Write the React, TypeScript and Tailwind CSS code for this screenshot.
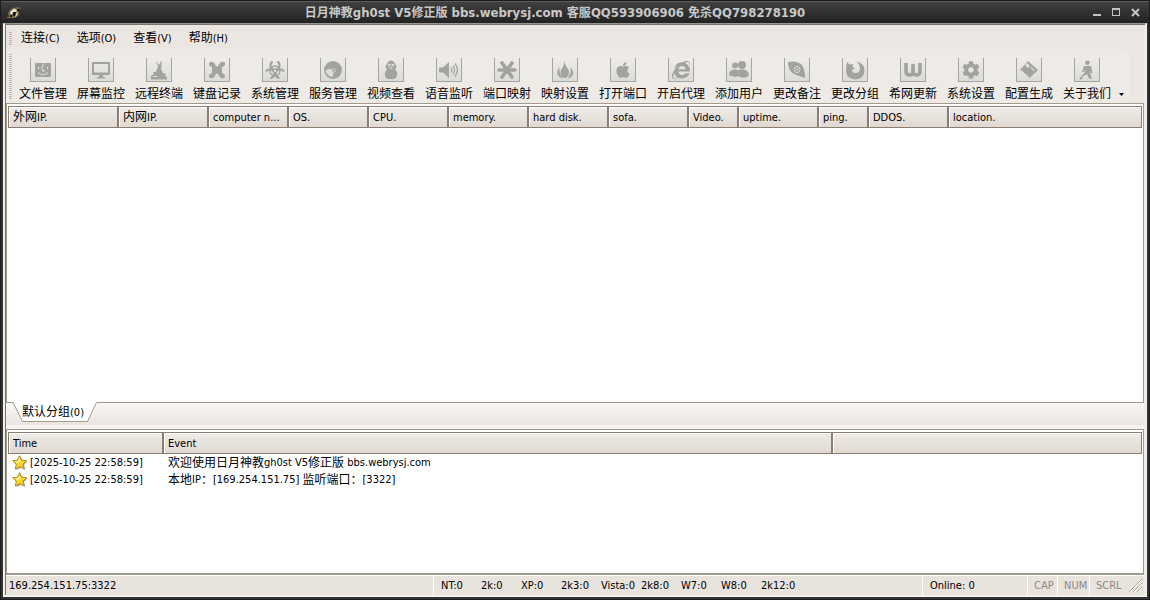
import React from "react";
import { FaApple, FaCog, FaInternetExplorer } from "react-icons/fa";

const CJK = /([\u3000-\u9fff\uff00-\uffef]+)/;

/** Chinese runs keep a 12px size whatever the size of the Latin text around them. */
function Mixed({ text }: { text: string }) {
  return (
    <>
      {text.split(CJK).map((part, i) =>
        i % 2 === 1 ? (
          <span key={i} className="text-[12px]">
            {part}
          </span>
        ) : (
          part
        ),
      )}
    </>
  );
}

const Draw = ({ children }: { children: React.ReactNode }) => (
  <svg viewBox="0 0 20 20" className="size-5" fill="currentColor" aria-hidden="true">
    {children}
  </svg>
);

const tools: { label: string; icon: React.ReactNode }[] = [
  {
    label: "文件管理",
    icon: (
      <Draw>
        <rect x="2" y="3" width="16" height="14" rx="1" />
        <path d="M10.5 3.500 C9 7 9 9 9 10.500 H11 V12 M5.500 7 V9 M14.500 7 V9 M5 12.500 C8 15.500 12 15.500 15 12.500" stroke="#e2e3e0" fill="none" />
      </Draw>
    ),
  },
  {
    label: "屏幕监控",
    icon: (
      <Draw>
        <path fillRule="evenodd" d="M1 2H19V15H12V17H14V18.500H6V17H8V15H1ZM3 4V12.500H17V4Z" />
      </Draw>
    ),
  },
  {
    label: "远程终端",
    icon: (
      <Draw>
        <path d="M6 1 10 5 12.500 0.500 12.500 6 12 9 14 13 17 14 16 16 18 17V19.500H2V16L5 14 4 12 7 12 9 6Z" />
        <path d="M4 16.500H8" stroke="#dddeda" fill="none" />
      </Draw>
    ),
  },
  {
    label: "键盘记录",
    icon: (
      <Draw>
        <path d="M2 3Q5 0 8 4Q8.500 6.500 10 6.500Q11.500 6.500 12 4Q15 0 18 3Q18.500 6 15 7V13Q18.500 14 18 17Q15 20 12 16Q11.500 13.500 10 13.500Q8.500 13.500 8 16Q5 20 2 17Q1.500 14 5 13V7Q1.500 6 2 3Z" />
      </Draw>
    ),
  },
  {
    label: "系统管理",
    icon: (
      <Draw>
        <g fill="none" stroke="currentColor">
          <path d="M7.500 1.500A4.500 4.500 0 1 0 12.500 1.500" strokeWidth="2.200" />
          <path d="M1 11.500A4.500 4.500 0 1 1 5.500 18.200" strokeWidth="2.200" />
          <path d="M19 11.500A4.500 4.500 0 1 0 14.500 18.200" strokeWidth="2.200" />
          <circle cx="10" cy="11" r="5" strokeWidth="1.400" />
        </g>
        <circle cx="10" cy="11" r="1.200" fill="#e0e1dd" />
      </Draw>
    ),
  },
  {
    label: "服务管理",
    icon: (
      <Draw>
        <circle cx="10" cy="10" r="9" />
        <path d="M2.500 11Q5 8 8.500 9.500Q10.500 7.500 12.500 9.500Q13 12 10.500 12.500L9.500 17Q4 16 2.500 11Z" fill="#dddeda" />
        <circle cx="10.500" cy="10.500" r="1.300" />
      </Draw>
    ),
  },
  {
    label: "视频查看",
    icon: (
      <Draw>
        <path d="M10 0.500Q13 0.500 14 4Q17 7 14 9.500Q17 12 16 16Q14 20 10 19Q6 20 4 16Q3 12 6 9.500Q3 7 6 4Q7 0.500 10 0.500Z" />
        <circle cx="8.300" cy="5" r="1.200" fill="#e2e3e0" />
        <circle cx="11.700" cy="5" r="1.200" fill="#e2e3e0" />
        <path d="M7.500 7.500H12.500L10 9Z" fill="#e2e3e0" />
      </Draw>
    ),
  },
  {
    label: "语音监听",
    icon: (
      <Draw>
        <path d="M0 7.500H4L10 2V18L4 12.500H0Z" />
        <path d="M12 7.500Q13.500 10 12 12.500M14 5.500Q17 10 14 14.500M16 3.500Q21 10 16 16.500" stroke="currentColor" strokeWidth="1.300" fill="none" />
      </Draw>
    ),
  },
  {
    label: "端口映射",
    icon: (
      <Draw>
        <path d="M10 10 5 3M10 10 15 3M10 10H2M10 10H18M10 10 5 17M10 10 15 17" stroke="currentColor" strokeWidth="3.600" strokeLinecap="round" />
      </Draw>
    ),
  },
  {
    label: "映射设置",
    icon: (
      <Draw>
        <path d="M10 0.500Q9 4 13 9Q16 14 11 18H9Q4 15 6 10Q9 6 10 0.500Z" />
        <path d="M4.500 7Q1.500 11 2.500 14.500Q4 18 8 18.500Q3.500 14 4.500 7ZM15.500 7Q19.500 12 17.500 15.500Q16 18 12.500 18.500Q17 13 15.500 7Z" />
      </Draw>
    ),
  },
  { label: "打开端口", icon: <FaApple className="size-[18px]" /> },
  { label: "开启代理", icon: <FaInternetExplorer className="size-[18px]" /> },
  {
    label: "添加用户",
    icon: (
      <Draw>
        <circle cx="6" cy="5.500" r="3" />
        <circle cx="13" cy="5" r="4" />
        <path d="M0 14Q1 9 6 9.500L10 10Q16 8 19 12Q21 15 18 17Q13 19 9 16Q6 18 4 16Q1 17 0 14Z" />
      </Draw>
    ),
  },
  {
    label: "更改备注",
    icon: (
      <Draw>
        <path d="M1 2Q10 0 15 5Q18 9 18 18Q12 16 7 14Q1 11 1 2Z" />
        <circle cx="10" cy="9.500" r="3" fill="none" stroke="#dddeda" />
        <circle cx="10" cy="9.500" r="1" fill="#dddeda" />
      </Draw>
    ),
  },
  {
    label: "更改分组",
    icon: (
      <Draw>
        <path d="M2 2 4.500 4.500 8 4 7.500 7 10 8.500 7 10Q7 13 10.500 13Q15 13 15 8.500Q15 4.500 11.500 1.500Q19.500 3 19.500 10.500Q19 19 10.500 19.500Q1.500 19 1 11Q1 6 2 2Z" />
      </Draw>
    ),
  },
  {
    label: "希网更新",
    icon: (
      <Draw>
        <path d="M3 3V11Q3 15 6.500 15Q10 15 10 11V4V11Q10 15 13.500 15Q17 15 17 11V3" fill="none" stroke="currentColor" strokeWidth="3.600" />
      </Draw>
    ),
  },
  { label: "系统设置", icon: <FaCog className="size-[18px]" /> },
  {
    label: "配置生成",
    icon: (
      <Draw>
        <path d="M9 1 19 10 10 18.500 1 10Z" />
        <path d="M2 10.800 10 17.800M12 7.500 15 10.500" stroke="#e2e3e0" strokeWidth="1.200" fill="none" />
        <path d="M8 3 11 6 9 8 6 5Z" fill="#e2e3e0" />
      </Draw>
    ),
  },
  {
    label: "关于我们",
    icon: (
      <Draw>
        <circle cx="10.500" cy="2.800" r="2.300" />
        <path d="M7 6H14L15.500 13H13.500L13 10V13L15 18.500H12L10 14L6 16.500H4L7.500 13V9L6.500 12H5Z" />
        <circle cx="4" cy="18" r="1.500" />
      </Draw>
    ),
  },
];

const hostColumns: [string, string][] = [
  ["外网IP.", "w-[111px]"],
  ["内网IP.", "w-[90px]"],
  ["computer n...", "w-20"],
  ["OS.", "w-20"],
  ["CPU.", "w-20"],
  ["memory.", "w-20"],
  ["hard disk.", "w-20"],
  ["sofa.", "w-20"],
  ["Video.", "w-[50px]"],
  ["uptime.", "w-20"],
  ["ping.", "w-[50px]"],
  ["DDOS.", "w-20"],
  ["location.", ""],
];

const events = [
  { time: "[2025-10-25 22:58:59]", text: "欢迎使用日月神教gh0st V5修正版 bbs.webrysj.com" },
  { time: "[2025-10-25 22:58:59]", text: "本地IP：[169.254.151.75] 监听端口：[3322]" },
];

const systems = ["NT:0", "2k:0", "XP:0", "2k3:0", "Vista:0", "2k8:0", "W7:0", "W8:0", "2k12:0"];

function HeadCell({ text, width }: { text: string; width: string }) {
  return (
    <th
      scope="col"
      className={`${width} h-[22px] overflow-hidden border-y border-r-2 border-[#8b7d72] bg-linear-to-b from-[#f0ece8] to-[#e0d9d2] p-0 pt-px pl-1 text-left font-normal whitespace-nowrap shadow-[inset_1px_1px_0_#fff] first:border-l last:border-r`}
    >
      <Mixed text={text} />
    </th>
  );
}

const Star = () => (
  <svg viewBox="0 0 16 16" className="size-4 shrink-0" aria-hidden="true">
    <path d="M8.500 1.500 10.800 6 15.500 6.500 12 10 13.500 15 9 12.800 4.500 15.200 5.200 10.500 2 7 6.500 6Z" fill="#777" opacity=".6" />
    <path d="M7.500 .7 9.700 5.200 14.700 5.800 11 9.200 12.200 14 7.800 11.700 3.300 14 4.300 9.200.7 5.800 5.500 5.200Z" fill="#fbd52c" stroke="#a87f1c" strokeWidth=".9" />
    <path d="M7.500 3 8.500 6.500 5 8 3 6.500 6 6Z" fill="#fff3a0" />
  </svg>
);

const Grip = ({ tall }: { tall?: boolean }) => (
  <span
    className={`${tall ? "h-[45px]" : "h-[13px]"} w-[3px] shrink-0 bg-[repeating-linear-gradient(to_bottom,#bdb8b1_0_1px,transparent_1px_2px)]`}
  />
);

export default function App() {
  return (
    <div className="flex h-screen flex-col border border-[#1c1c1c] bg-[#333] font-['DejaVu_Sans_Condensed','Noto_Sans_CJK_SC',sans-serif] text-[11px] leading-4 text-black select-none">
      <header className="flex h-[22px] shrink-0 items-center border-t border-[#5c5c5c] bg-linear-to-b from-[#404040] to-[#222] px-1.5">
        <div className="flex flex-1">
          <svg viewBox="0 0 14 14" className="size-3.5" aria-hidden="true">
            <path d="M1 7Q3 3 6 2L11 1L11.500 4L12 9L8 12L3 12L1.500 10Z" fill="#6f6a50" />
            <path d="M3 6 7 2.500 10 4 9 6 6 7 4 9Z" fill="#e9e2c5" />
            <path d="M6 6H9V10H6ZM10 3H12V5H10ZM3 9H5V11H3Z" fill="#171717" />
            <path d="M9 7 11 6 10 10 8 11Z" fill="#d5cda9" />
            <path d="M0 11.500H4M11 2H13.500" stroke="#9c6b20" />
          </svg>
        </div>
        <h1 className="pr-10 text-[13px] font-bold whitespace-nowrap text-[#c8c8c8]">
          <Mixed text="日月神教gh0st V5修正版 bbs.webrysj.com 客服QQ593906906 免杀QQ798278190" />
        </h1>
        <div className="flex flex-1 justify-end gap-1 text-[#c4c4c4]">
          <button aria-label="最小化" className="p-[3px]">
            <svg viewBox="0 0 9 9" className="size-[9px]"><path d="M0 6H8V8H0Z" fill="currentColor" /></svg>
          </button>
          <button aria-label="最大化" className="p-[3px]">
            <svg viewBox="0 0 9 9" className="size-[9px]"><path fillRule="evenodd" d="M0 0H8V8H0ZM1 2V7H7V2Z" fill="currentColor" /></svg>
          </button>
          <button aria-label="关闭" className="p-[3px]">
            <svg viewBox="0 0 9 9" className="size-[9px]"><path d="M1 1 8 8M8 1 1 8" stroke="currentColor" strokeWidth="2" /></svg>
          </button>
        </div>
      </header>

      <div className="mx-0.5 mb-0.5 flex min-h-0 flex-1 flex-col border-x-2 border-t border-b-2 border-x-[#f3f1ec] border-t-[#99958f] border-b-[#f3f1ec] bg-[#ebe6e2]">
        <div className="flex min-h-0 flex-1 flex-col border-t border-l border-[#77736f] pr-px">
          <nav className="flex h-6 shrink-0 items-center gap-[5px] pt-0.5 pl-[3px]">
            <Grip />
            <div className="flex gap-[9px]">
              {["连接(C)", "选项(O)", "查看(V)", "帮助(H)"].map((m) => (
                <button key={m} className="px-1">
                  <Mixed text={m} />
                </button>
              ))}
            </div>
          </nav>

          <div role="toolbar" aria-label="工具栏" className="mr-[15px] flex h-[54px] shrink-0 items-center rounded-r-sm bg-[#eeebe7] pl-[3px]">
            <Grip tall />
            <div className="ml-0.5 flex self-start pt-[9px]">
              {tools.map(({ label, icon }) => (
                <button key={label} className="flex w-[58px] flex-col items-center gap-1 text-[12px] whitespace-nowrap">
                  <span className="flex h-6 w-[26px] items-center justify-center border-x border-b border-[#a5a5a2] bg-linear-to-b from-[#eeece9] to-[#dadcd7] text-[#a2a2a0]">
                    {icon}
                  </span>
                  {label}
                </button>
              ))}
            </div>
            <button aria-label="更多" className="ml-[3px] self-end pb-[7px]">
              <svg viewBox="0 0 5 3" className="h-[3px] w-[5px]"><path d="M0 0H5L2.500 3Z" /></svg>
            </button>
          </div>

          <main className="min-h-0 flex-1 border border-[#a09b8c] bg-white px-px pt-0.5">
            <table className="w-full table-fixed border-separate border-spacing-0">
              <thead>
                <tr>
                  {hostColumns.map(([text, width]) => (
                    <HeadCell key={text} text={text} width={width} />
                  ))}
                </tr>
              </thead>
            </table>
          </main>

          <div role="tablist" className="h-[26px] shrink-0 border-b-4 border-[#f5f3f1] bg-linear-to-b from-[#f9f8f7] to-[#e9e4e0] pl-[7px]">
            <button role="tab" aria-selected="true" className="relative -mt-px flex h-5 w-[84px] items-center justify-center">
              <svg viewBox="0 0 84 20" className="absolute inset-0 h-5 w-[84px]" aria-hidden="true">
                <path d="M0 0H84L75 19.500H9L0 0Z" fill="#fff" />
                <path d="M0 .5 9.500 19.500H74.500L83.500 .5" fill="none" stroke="#a09b8c" />
              </svg>
              <span className="relative pr-1">
                <Mixed text="默认分组(0)" />
              </span>
            </button>
          </div>

          <section className="h-[146px] shrink-0 border border-b-2 border-[#a09b8c] bg-white px-px pt-0.5">
            <table className="w-full table-fixed border-separate border-spacing-0">
              <thead>
                <tr>
                  <HeadCell text="Time" width="w-[156px]" />
                  <HeadCell text="Event" width="w-[669px]" />
                  <HeadCell text="" width="" />
                </tr>
              </thead>
              <tbody>
                {events.map((e) => (
                  <tr key={e.text} className="h-[17px] whitespace-nowrap">
                    <td className="p-0 pl-1">
                      <span className="flex items-center gap-0.5">
                        <Star />
                        {e.time}
                      </span>
                    </td>
                    <td className="p-0 pl-1">
                      <span className="flex h-4 items-center whitespace-pre">
                        <Mixed text={e.text} />
                      </span>
                    </td>
                    <td className="p-0" />
                  </tr>
                ))}
              </tbody>
            </table>
          </section>

          <footer className="flex h-5 shrink-0 items-center border-t border-white bg-[#e8e3dd] leading-[18px]">
            <span className="flex-1 pl-[3px]">169.254.151.75:3322</span>
            <div className="flex w-[489px] border-l border-white pl-[7px]">
              {systems.map((s) => (
                <span key={s} className="w-10 whitespace-nowrap">
                  {s}
                </span>
              ))}
            </div>
            <span className="w-[105px] border-l border-white pl-[7px]">Online: 0</span>
            <span className="w-[30px] border-l border-white pl-[6px] text-[#8d8984]">CAP</span>
            <span className="w-8 border-l border-white pl-[6px] text-[#8d8984]">NUM</span>
            <span className="w-10 border-l border-white pl-[6px] text-[#8d8984]">SCRL</span>
            <svg viewBox="0 0 13 13" className="mr-0.5 size-[13px]" aria-hidden="true">
              <path d="M0 13 13 0M4 13 13 4M8 13 13 8" stroke="#aaa59b" />
              <path d="M1 13 13 1M5 13 13 5M9 13 13 9" stroke="#fff" />
            </svg>
          </footer>
        </div>
      </div>
    </div>
  );
}
